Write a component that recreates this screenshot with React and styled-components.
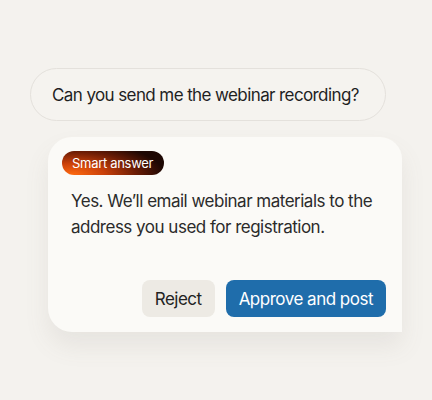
import React from "react";
import styled, { createGlobalStyle } from "styled-components";

const Global = createGlobalStyle`
  html, body { margin: 0; padding: 0; background: #f4f2ee; }
  body { font-family: Inter, "Noto Sans", sans-serif; -webkit-font-smoothing: antialiased; }
`;

const Page = styled.div`
  width: 432px;
  height: 400px;
  box-sizing: border-box;
  padding-top: 68px;
  display: flex;
  flex-direction: column;
  overflow: hidden;
`;

const Bubble = styled.div`
  margin-left: 30px;
  width: 356px;
  height: 53px;
  box-sizing: border-box;
  border: 1px solid #e4e1dc;
  border-radius: 27px;
  background: #f5f3ef;
  display: flex;
  align-items: center;
  padding-left: 21px;
  font-size: 17px;
  color: #1f1f1f;
  letter-spacing: -0.6px;
`;

const Card = styled.div`
  margin-top: 16px;
  margin-left: 48px;
  width: 354px;
  height: 195px;
  box-sizing: border-box;
  background: #fbfaf7;
  border-radius: 24px 22px 0 24px;
  box-shadow: 0 14px 24px rgba(120, 110, 95, 0.10);
  padding: 14px 16px 15px 14px;
  display: flex;
  flex-direction: column;
`;

const Badge = styled.span`
  align-self: flex-start;
  height: 24px;
  box-sizing: border-box;
  padding: 0 11px 0 10px;
  border-radius: 12px;
  display: inline-flex;
  align-items: center;
  font-size: 13px;
  color: #fff;
  letter-spacing: -0.3px;
  background: radial-gradient(ellipse 90% 140% at 10% 100%, #ff6a10 0%, #c9400a 35%, #6a1c05 70%, #1d0703 100%);
`;

const Answer = styled.p`
  margin: 13px 0 0 9px;
  font-size: 17px;
  line-height: 26px;
  color: #2b2b2b;
  letter-spacing: -0.5px;
`;

const Actions = styled.div`
  margin-top: auto;
  display: flex;
  justify-content: flex-end;
  gap: 11px;
`;

const Button = styled.button`
  height: 37px;
  border: none;
  border-radius: 8px;
  padding: 0 13px;
  font-family: inherit;
  font-size: 17px;
  letter-spacing: -0.5px;
  background: ${(p) => (p.$primary ? "#1f6dab" : "#edeae4")};
  color: ${(p) => (p.$primary ? "#ffffff" : "#222222")};
  cursor: pointer;
`;

export default function App() {
  return (
    <>
      <Global />
      <Page>
        <Bubble>Can you send me the webinar recording?</Bubble>
        <Card>
          <Badge>Smart answer</Badge>
          <Answer>
            Yes. We’ll email webinar materials to the
            <br />
            address you used for registration.
          </Answer>
          <Actions>
            <Button>Reject</Button>
            <Button $primary>Approve and post</Button>
          </Actions>
        </Card>
      </Page>
    </>
  );
}
